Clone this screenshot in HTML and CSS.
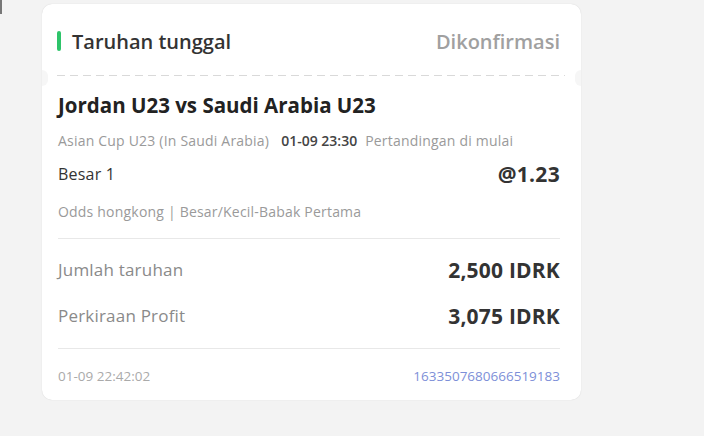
FILE: index.html
```html
<!DOCTYPE html>
<html lang="id">
<head>
<meta charset="utf-8">
<title>Taruhan tunggal</title>
<link rel="stylesheet" href="styles.css">
</head>
<body>
<span class="edge-mark"></span>
<div class="card">
  <div class="card-head">
    <div class="head-title"><span class="accent"></span>Taruhan tunggal</div>
    <div class="head-status">Dikonfirmasi</div>
  </div>
  <div class="dash"></div>
  <div class="card-body">
    <div class="match">Jordan U23 vs Saudi Arabia U23</div>
    <div class="meta">
      <span class="league">Asian Cup U23 (In Saudi Arabia)</span>
      <span class="time">01-09 23:30</span>
      <span class="state">Pertandingan di mulai</span>
    </div>
    <div class="pick">
      <span class="pick-name">Besar 1</span>
      <span class="pick-odds">@1.23</span>
    </div>
    <div class="market">Odds hongkong | Besar/Kecil-Babak Pertama</div>
    <div class="sep"></div>
    <div class="amount">
      <span class="label">Jumlah taruhan</span>
      <span class="value">2,500 IDRK</span>
    </div>
    <div class="amount amount-2">
      <span class="label">Perkiraan Profit</span>
      <span class="value">3,075 IDRK</span>
    </div>
    <div class="sep sep-2"></div>
    <div class="foot">
      <span class="stamp">01-09 22:42:02</span>
      <span class="order-id">1633507680666519183</span>
    </div>
  </div>
</div>
</body>
</html>
```

FILE: styles.css
```css
* { box-sizing: border-box; }
html, body { margin: 0; padding: 0; }
body {
  width: 704px;
  height: 436px;
  background: #f3f3f3;
  font-family: "Open Sans", "Noto Sans", sans-serif;
  color: #333;
  position: relative;
  overflow: hidden;
  padding: 4px 0 0 42px;
}
.edge-mark {
  position: absolute;
  left: 0;
  top: 0;
  width: 2px;
  height: 14px;
  background: #777;
}
.card {
  position: relative;
  width: 539px;
  height: 396px;
  background: #fff;
  border-radius: 10px;
  box-shadow: 0 0 1px rgba(0,0,0,0.18);
}
.card-head {
  height: 71px;
  padding: 3px 21px 0 15px;
  display: flex;
  align-items: center;
  justify-content: space-between;
}
.head-title {
  display: flex;
  align-items: center;
  font-size: 20px;
  font-weight: 600;
  color: #333;
}
.accent {
  width: 4px;
  height: 20px;
  background: #2ec46a;
  border-radius: 2px;
  margin-right: 11px;
}
.head-status {
  font-size: 20px;
  font-weight: 600;
  color: #a0a0a0;
}
.dash {
  position: relative;
  height: 1px;
  margin: 0 16px 0 15px;
  background: repeating-linear-gradient(to right, #d9d9d9 0 8px, transparent 8px 13px);
}
.card::before, .card::after {
  content: "";
  position: absolute;
  top: 66px;
  width: 6px;
  height: 16px;
  background: #f6f6f6;
}
.card::before { left: 0; border-radius: 0 8px 8px 0; }
.card::after { right: 0; border-radius: 8px 0 0 8px; }
.card-body {
  padding: 16px 21px 0 16px;
}
.match {
  font-size: 20.5px;
  font-weight: 700;
  line-height: 26px;
  color: #222;
}
.meta {
  margin-top: 13px;
  line-height: 20px;
  font-size: 14px;
  color: #9a9a9a;
  display: flex;
  letter-spacing: 0.2px;
}
.time { color: #444; font-weight: 600; margin-left: 12px; letter-spacing: 0; }
.state { margin-left: 8px; }
.pick {
  margin-top: 11px;
  line-height: 24px;
  display: flex;
  justify-content: space-between;
  align-items: center;
}
.pick-name { font-size: 16px; color: #333; letter-spacing: 0.2px; }
.pick-odds { font-size: 21px; font-weight: 700; color: #333; letter-spacing: 0.3px; }
.market {
  margin-top: 16px;
  line-height: 20px;
  font-size: 14px;
  color: #9a9a9a;
  letter-spacing: 0.2px;
}
.sep {
  height: 1px;
  background: #e8e8e8;
  margin-top: 16px;
}
.amount {
  margin-top: 18px;
  line-height: 26px;
  display: flex;
  justify-content: space-between;
  align-items: center;
}
.amount-2 { margin-top: 20px; }
.label { font-size: 17px; color: #8a8a8a; letter-spacing: 0.2px; }
.value { font-size: 21px; font-weight: 700; color: #333; letter-spacing: 0.2px; }
.sep-2 { margin-top: 19px; }
.foot {
  margin-top: 17px;
  line-height: 20px;
  display: flex;
  justify-content: space-between;
  align-items: center;
  font-size: 13.5px;
}
.stamp { color: #aaa; }
.order-id { color: #7d8fd8; }
```
